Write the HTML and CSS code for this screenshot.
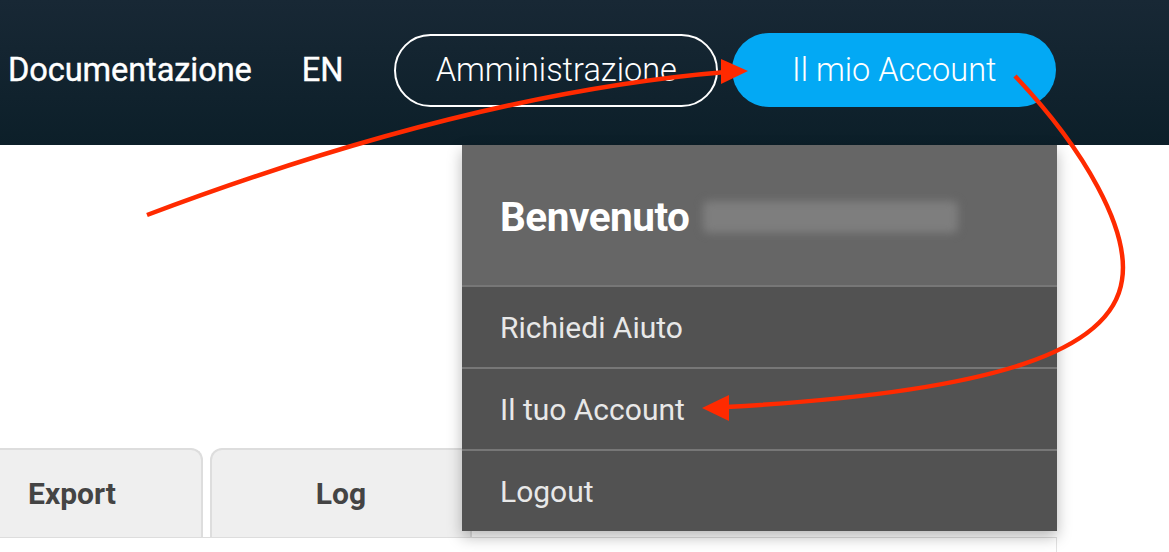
FILE: index.html
```html
<!DOCTYPE html>
<html lang="it">
<head>
<meta charset="utf-8">
<title>Account</title>
<link rel="stylesheet" href="styles.css">
</head>
<body>
<div class="page">
  <header class="topbar">
    <a class="nav-link doc">Documentazione</a>
    <a class="nav-link lang">EN</a>
    <a class="btn btn-outline">Amministrazione</a>
    <a class="btn btn-primary">Il mio Account</a>
  </header>

  <main class="content">
    <div class="tabs">
      <div class="tab tab-export">Export</div>
      <div class="tab tab-log">Log</div>
    </div>
    <div class="panel"></div>
  </main>

  <div class="dropdown">
    <div class="dd-head">
      <span class="welcome">Benvenuto</span>
      <span class="user-blur"></span>
    </div>
    <a class="dd-item">Richiedi Aiuto</a>
    <a class="dd-item">Il tuo Account</a>
    <a class="dd-item">Logout</a>
  </div>

  <svg class="arrows" width="1169" height="552" viewBox="0 0 1169 552">
    <path d="M147,215 Q471,93 726,72" />
    <polygon points="721,59 748,71 721,84" />
    <path d="M1015,76 C1085,150 1130,230 1122,280 C1112,350 1000,392 726,407" />
    <polygon points="729,395 702,408 729,421" />
  </svg>
</div>
</body>
</html>
```

FILE: styles.css
```css
* { box-sizing: border-box; }

html, body {
  margin: 0;
  padding: 0;
  background: #ffffff;
  font-family: Roboto, "Liberation Sans", Arial, sans-serif;
  overflow: hidden;
}

.page {
  position: relative;
  width: 1169px;
  height: 552px;
  overflow: hidden;
}

.topbar {
  height: 145px;
  background: linear-gradient(#182835, #0c1f29);
  display: flex;
  align-items: center;
  padding-left: 8px;
  padding-bottom: 5px;
}

.nav-link {
  color: #ffffff;
  font-size: 32.6px;
  font-weight: 400;
  letter-spacing: -0.1px;
  -webkit-text-stroke: 0.4px #ffffff;
}

.doc { margin-right: 50px; }
.lang { margin-right: 51px; }

.btn {
  display: flex;
  align-items: center;
  justify-content: center;
  border-radius: 40px;
  color: #ffffff;
  font-size: 32.5px;
  font-weight: 300;
}

.btn-outline {
  width: 324px;
  height: 73px;
  border: 2px solid #ffffff;
  margin-right: 14px;
}

.btn-primary {
  width: 324px;
  height: 74px;
  background: #03a9f4;
}

.content {
  padding-top: 303px;
}

.tabs {
  display: flex;
  gap: 7px;
  margin-left: -59px;
  height: 89px;
}

.tab {
  width: 262px;
  height: 89px;
  background: #efefef;
  border: 2px solid #dddddd;
  border-bottom: none;
  border-radius: 12px 12px 0 0;
  display: flex;
  align-items: center;
  justify-content: center;
  font-size: 30px;
  font-weight: 700;
  color: #444444;
  padding-bottom: 1px;
}

.panel {
  width: 1057px;
  height: 40px;
  border-top: 1px solid #dddddd;
  border-right: 1px solid #e2e2e2;
}

.dropdown {
  position: absolute;
  left: 462px;
  top: 145px;
  width: 595px;
  box-shadow: 0 6px 14px rgba(0, 0, 0, 0.28);
  background: #525252;
}

.dd-head {
  height: 140px;
  background: #666666;
  display: flex;
  align-items: center;
  padding-left: 38px;
  padding-top: 4px;
}

.welcome {
  color: #ffffff;
  font-size: 40.5px;
  font-weight: 700;
  letter-spacing: -0.5px;
}

.user-blur {
  display: block;
  width: 255px;
  height: 32px;
  margin-left: 14px;
  background: #7e7e7e;
  border-radius: 6px;
  filter: blur(4px);
}

.dd-item {
  display: flex;
  align-items: center;
  height: 82px;
  border-top: 2px solid #777777;
  padding-left: 38px;
  color: #e8e8e8;
  font-size: 30px;
  font-weight: 400;
}

.arrows {
  position: absolute;
  left: 0;
  top: 0;
  pointer-events: none;
}

.arrows path {
  fill: none;
  stroke: #ff2a00;
  stroke-width: 4.5;
}

.arrows polygon {
  fill: #ff2a00;
}
```
